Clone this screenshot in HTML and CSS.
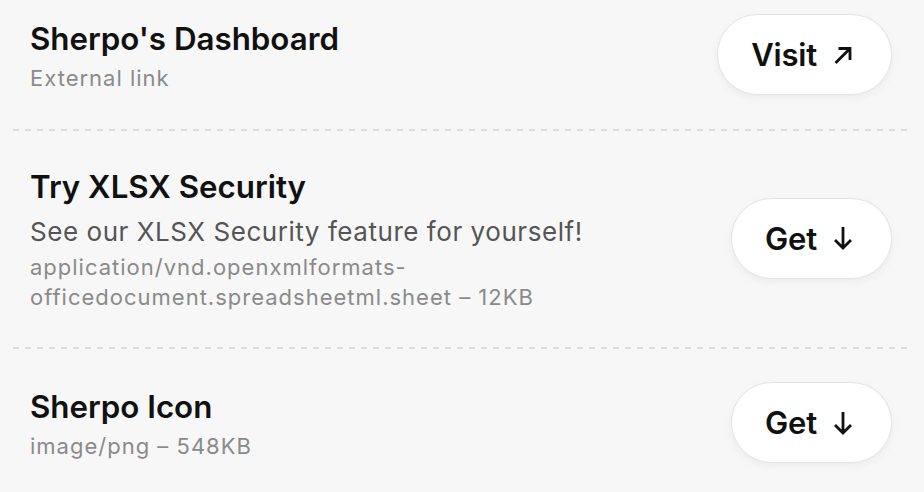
FILE: index.html
```html
<!DOCTYPE html>
<html lang="en">
<head>
<meta charset="utf-8">
<title>Files</title>
<link rel="stylesheet" href="styles.css">
</head>
<body>
<main class="list">
  <section class="row row-first">
    <div class="info">
      <div class="title">Sherpo's Dashboard</div>
      <div class="meta">External link</div>
    </div>
    <a class="btn" href="#">
      <span>Visit</span>
      <svg class="icon icon-ne" viewBox="0 0 20 20" width="20" height="20" aria-hidden="true">
        <path d="M2.5 18 L17 3.5 M5.5 3.5 H17 V15" fill="none" stroke="#111" stroke-width="2.8" stroke-linecap="butt" stroke-linejoin="miter"/>
      </svg>
    </a>
  </section>
  <section class="row row-mid">
    <div class="info">
      <div class="title">Try XLSX Security</div>
      <div class="desc">See our XLSX Security feature for yourself!</div>
      <div class="meta">application/vnd.openxmlformats-officedocument.spreadsheetml.sheet – 12KB</div>
    </div>
    <a class="btn" href="#">
      <span>Get</span>
      <svg class="icon icon-down" viewBox="0 0 20 24" width="20" height="24" aria-hidden="true">
        <path d="M10 1 V22 M2 14 L10 22 L18 14" fill="none" stroke="#111" stroke-width="2.8" stroke-linecap="butt" stroke-linejoin="miter"/>
      </svg>
    </a>
  </section>
  <section class="row row-last">
    <div class="info">
      <div class="title">Sherpo Icon</div>
      <div class="meta">image/png – 548KB</div>
    </div>
    <a class="btn" href="#">
      <span>Get</span>
      <svg class="icon icon-down" viewBox="0 0 20 24" width="20" height="24" aria-hidden="true">
        <path d="M10 1 V22 M2 14 L10 22 L18 14" fill="none" stroke="#111" stroke-width="2.8" stroke-linecap="butt" stroke-linejoin="miter"/>
      </svg>
    </a>
  </section>
</main>
</body>
</html>
```
FILE: styles.css
```css
* { box-sizing: border-box; }
html, body {
  margin: 0;
  padding: 0;
  background: #f7f7f7;
}
body {
  font-family: Inter, "Noto Sans", "Liberation Sans", sans-serif;
  color: #111;
  overflow: hidden;
  height: 492px;
}
.list {
  margin: 0 13px;
}
.row {
  display: flex;
  align-items: center;
  gap: 24px;
  padding-left: 17px;
  padding-right: 19px;
  background-image: repeating-linear-gradient(to right, #dddddd 0 6px, transparent 6px 12px);
  background-size: 100% 2px;
  background-repeat: no-repeat;
  background-position: left bottom;
}
.row-first {
  padding-top: 14px;
  padding-bottom: 32px;
}
.row-mid {
  padding-top: 37px;
  padding-bottom: 37px;
}
.row-last {
  background-image: none;
  padding-top: 33px;
  padding-bottom: 30px;
}
.info {
  flex: 1;
  min-width: 0;
  display: flex;
  flex-direction: column;
  gap: 5px;
}
.title {
  font-size: 31.3px;
  line-height: 38px;
  font-weight: 600;
  color: #111;
}
.desc {
  font-size: 26px;
  line-height: 36px;
  color: #555;
  letter-spacing: 0.55px;
  margin-top: 3px;
  margin-bottom: -3px;
}
.meta {
  font-size: 22px;
  line-height: 30px;
  color: #8a8a8a;
  letter-spacing: 1px;
}
.btn {
  flex: none;
  display: flex;
  align-items: center;
  gap: 16px;
  height: 81px;
  padding: 0 38px 0 33px;
  margin-bottom: 4px;
  border-radius: 41px;
  background: #fff;
  border: 1px solid #e3e3e3;
  box-shadow: 0 3px 8px rgba(0, 0, 0, 0.05);
  color: #111;
  text-decoration: none;
  font-size: 31px;
  font-weight: 600;
  letter-spacing: -0.2px;
}
.icon {
  display: block;
  flex: none;
}
```
